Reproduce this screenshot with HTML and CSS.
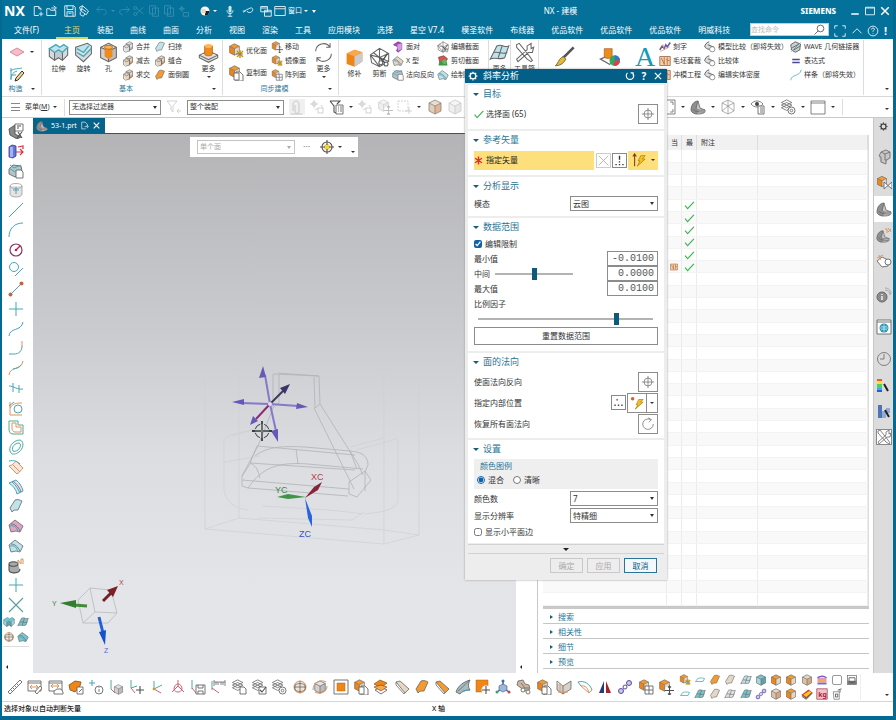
FILE: index.html
```html
<!DOCTYPE html>
<html lang="zh-CN">
<head>
<meta charset="utf-8">
<title>NX - 建模</title>
<link rel="stylesheet" href="styles.css">
</head>
<body>
<svg class="defs" aria-hidden="true">
  <symbol id="cube" viewBox="0 0 16 16"><path class="fa" d="M8 1l6 3-6 3-6-3z"/><path class="fb" d="M2 4l6 3v8l-6-3z"/><path class="fc" d="M14 4L8 7v8l6-3z"/><path class="k" d="M8 1l6 3v8l-6 3-6-3V4zM2 4l6 3 6-3M8 7v8"/></symbol>
  <symbol id="cubecopy" viewBox="0 0 16 16"><use href="#cube" width="13" height="13"/><path class="w" d="M8 7h4l3 3v6H8z"/><path class="w" d="M6 8h5v7H6z"/></symbol>
  <symbol id="cubemove" viewBox="0 0 16 16"><use href="#cube" width="13" height="13"/><circle cx="11.500" cy="11.500" r="4.500" fill="#fff"/><path class="k2" d="M11.500 7v9M7 11.500h9M10 8.500l1.500-1.500L13 8.500M10 14.500l1.500 1.500 1.500-1.500"/></symbol>
  <symbol id="cubestar" viewBox="0 0 16 16"><use href="#cube" width="13" height="13"/><path d="M9 8l6 6M15 8l-6 6M12 7v8" stroke="#c69a1c" stroke-width="1.500"/><path class="k" d="M8 11h7"/></symbol>
  <symbol id="cubegrid" viewBox="0 0 16 16"><use href="#cube" width="12" height="12"/><path class="w" d="M7 7h8v8H7zM11 7v8M7 11h8"/></symbol>
  <symbol id="bend" viewBox="0 0 16 16"><path class="fa" d="M1 5l5-3 3 2 3-2 3 2-4 4-3-2-3 2z"/><path class="fb" d="M1 5l4 3v6l-4-3zM11 8l4-4v6l-4 4z"/><path class="fc" d="M5 8l3-2 3 2v6l-3-2-3 2z"/><path class="k" d="M1 5v6l4 3 3-2 3 2 4-4V4M5 8v6M11 8v6"/><path class="t" d="M1 5l5-3 3 2 3-2 3 2-4 4-3-2-3 2z"/></symbol>
  <symbol id="revolve" viewBox="0 0 16 16"><path class="fa" d="M2 4l9-3 3 2-7 6z"/><path class="fb" d="M2 4l5 5 7-6v6l-6 6-6-5z"/><path class="k" d="M2 4l9-3 3 2v6l-6 6-6-5z"/><path class="t" d="M3 8l5 3 6-6M3 5l5 3 4-5"/></symbol>
  <symbol id="hole" viewBox="0 0 16 16"><use href="#cube" width="16" height="16"/><path fill="#ef8a1d" d="M5 4c0-2 6-2 6 0v7l-3 2-3-2z"/><ellipse cx="8" cy="4" rx="3" ry="1.500" fill="#ffb14d" stroke="#a55a10" stroke-width=".5"/></symbol>
  <symbol id="more3d" viewBox="0 0 16 16"><path d="M1 11l7-3 7 3-7 4z" fill="#ddd"/><path class="k" d="M1 10l7-3 7 3v2l-7 3.500L1 12zM1 10l7 3.500 7-3.500"/><path d="M5 3v6c0 2 6 2 6 0V3z" fill="#f08a1c" stroke="#a55a10" stroke-width=".5"/><ellipse cx="8" cy="3" rx="3" ry="1.500" fill="#ffb657"/></symbol>
  <symbol id="unite" viewBox="0 0 16 16"><path class="fa" d="M4 4l6-3 4 2v7l-5 5-6-2V7z"/><path class="fc" d="M10 9l4-2v3l-5 5z"/><path class="k" d="M5 4l5-3 4 2v7l-4 2V5zM10 5l4-2M2 7l4-2 4 2v6l-5 2-3-2zM2 7l4 2 4-2"/></symbol>
  <symbol id="sheet" viewBox="0 0 16 16"><path class="fa" d="M2 10L7 2c3-1 5 0 7 1l-4 9c-3 0-5 0-6 2z"/><path class="k" d="M2 10L7 2c3-1 5 0 7 1l-4 9c-3 0-5 0-6 2z"/></symbol>
  <symbol id="patchsheet" viewBox="0 0 16 16"><path class="fa" d="M1 13L6 3c4-2 6 2 9 0l-3 9c-4 2-7-1-11 1z"/><path class="k" d="M1 13L6 3c4-2 6 2 9 0l-3 9c-4 2-7-1-11 1zM4 8c4-1 6 2 10 0M10 3L7 12"/></symbol>
  <symbol id="stripe" viewBox="0 0 16 16"><path class="fa" d="M2 3l4-1 9 8-4 4z"/><path class="k" d="M2 3l4-1 9 8-4 4zM2 3v3l8 9 1-1"/></symbol>
  <symbol id="refresh" viewBox="0 0 16 16"><path class="k" d="M2 7a6 6 0 0 1 11-3M14 9a6 6 0 0 1-11 3M13 1v3h-3M3 15v-3h3"/></symbol>
  <symbol id="solid" viewBox="0 0 16 16"><path d="M2 5l6-3 6 2v7l-6 4-6-2z" fill="#ef8419"/><path d="M8 7l6-3v7l-6 4z" fill="#c9cbd0"/><path d="M2 5l6-3 6 2-6 3z" fill="#f9a94a"/></symbol>
  <symbol id="cutmesh" viewBox="0 0 16 16"><path class="k" d="M1 6l7-5 7 4v6l-7 4-6-3zM1 6l7 2 7-3M8 1v14M1 6l7 9M8 8l7 3M3 4l5 4"/><circle cx="9" cy="12" r="1.500" class="w"/><circle cx="13" cy="13" r="1.500" class="w"/><path class="k2" d="M10 11l4-6M12 12l-4-4"/></symbol>
  <symbol id="tools" viewBox="0 0 16 16"><path class="k" d="M2 2l2-1 8 10 2 3-1 1-3-2L2 4zM13 1l-3 2v3L2 13l1 2 8-7h3l1-4-2 1z"/></symbol>
  <symbol id="brush" viewBox="0 0 16 16"><path d="M15 1L7 9" stroke="#555" stroke-width="2"/><path d="M7 8l2 2c-2 4-5 5-8 5 2-1 2-5 6-7z" fill="#e7ba2d" stroke="#555" stroke-width=".6"/></symbol>
  <symbol id="pie3d" viewBox="0 0 16 16"><path class="w" d="M1 10l7-3 6 3-6 4z"/><path d="M4 2v6c0 2 6 2 6 0V2z" fill="#f08a1c" stroke="#a55a10" stroke-width=".5"/><circle cx="12" cy="11" r="4" fill="#35a85a"/><path d="M12 11V7a4 4 0 0 1 4 4z" fill="#3c71d0"/><path d="M12 11h4a4 4 0 0 1-5 4z" fill="#e03b4e"/></symbol>
  <symbol id="lens" viewBox="0 0 16 16"><circle cx="10" cy="6" r="4.500" class="k2"/><path class="k2" d="M7 9l-5 5"/></symbol>
  <symbol id="target" viewBox="0 0 16 16"><circle cx="8" cy="8" r="4.500" class="k"/><path class="k" d="M8 1v14M1 8h14"/></symbol>
  <symbol id="gear" viewBox="0 0 16 16"><circle cx="8" cy="8" r="4.500" fill="none" stroke="currentColor" stroke-width="2"/><path d="M8 1v2M8 13v2M1 8h2M13 8h2M3 3l1.500 1.500M11.500 11.500L13 13M13 3l-1.500 1.500M3 13l1.500-1.500" stroke="currentColor" stroke-width="2"/></symbol>
  <symbol id="reset" viewBox="0 0 16 16"><path d="M4 3a6 6 0 1 0 8 0M9 3h4v4" fill="none" stroke="currentColor" stroke-width="1.800"/></symbol>
  <symbol id="close" viewBox="0 0 16 16"><path d="M3 3l10 10M13 3L3 13" stroke="currentColor" stroke-width="2"/></symbol>
  <symbol id="check" viewBox="0 0 16 16"><path d="M1 9l4 5L15 3" fill="none" stroke="#35b54c" stroke-width="1.800"/></symbol>
  <symbol id="star" viewBox="0 0 16 16"><path d="M8 1v14M2 4l12 8M14 4L2 12" stroke="#e02c2c" stroke-width="2.500"/></symbol>
  <symbol id="cross" viewBox="0 0 16 16"><path d="M1 1l14 14M15 1L1 15" stroke="currentColor" stroke-width="1.200"/></symbol>
  <symbol id="dots" viewBox="0 0 16 16"><path fill="currentColor" d="M7 1h2v6H7zM7 9h2v2H7zM2 13h2v2H2zM7 13h2v2H7zM12 13h2v2h-2z"/></symbol>
  <symbol id="pdots" viewBox="0 0 16 16"><circle cx="6" cy="4" r="1.500" fill="#c26d5b"/><path fill="#444" d="M2 11h2v2H2zM7 11h2v2H7zM12 11h2v2h-2z"/></symbol>
  <symbol id="vecbolt" viewBox="0 0 16 16"><path d="M3 15V2M1 4l2-3 2 3" fill="none" stroke="#7a3b22" stroke-width="1.200"/><path d="M10 3h5l-3 4h3l-9 8 3-6H7z" fill="#f6c11d" stroke="#967110" stroke-width=".7"/></symbol>
  <symbol id="ptbolt" viewBox="0 0 16 16"><circle cx="3" cy="3" r="2" fill="#d2622f"/><path d="M10 4h5l-3 3h3l-9 8 3-5H7z" fill="#f6c11d" stroke="#967110" stroke-width=".7"/></symbol>
  <symbol id="restore" viewBox="0 0 16 16"><path class="k" d="M11 3a6 6 0 1 0 3 5M8 1l4 2-3 3"/></symbol>
  <symbol id="newdoc" viewBox="0 0 16 16"><path class="p" d="M9 14H3V2h6l3 3v2M9 2v3h3M12 9v6M9 12h6"/></symbol>
  <symbol id="open" viewBox="0 0 16 16"><path class="p" d="M1 14V5h4l1 2h7v7zM7 4h5M10 1l4 3-4 3"/></symbol>
  <symbol id="save" viewBox="0 0 16 16"><path class="p" d="M1 1h12l2 2v12H1zM4 1v5h8V1M4 15V9h8v6M6 11h4"/></symbol>
  <symbol id="pens" viewBox="0 0 16 16"><path class="p" d="M2 3l4-2 8 7-3 5-7-5zM6 1l-2 7M3 9v4l4 2 2-3M5 5l6 4"/></symbol>
  <symbol id="undo" viewBox="0 0 16 16"><path class="p" d="M5 2L1 6l4 4M1 6h9c5 0 5 7 0 7"/></symbol>
  <symbol id="redo" viewBox="0 0 16 16"><path class="p" d="M11 2l4 4-4 4M15 6H6c-5 0-5 7 0 7"/></symbol>
  <symbol id="scissors" viewBox="0 0 16 16"><path class="p" d="M4 12L14 3M4 4l10 8"/><circle cx="3" cy="4" r="2" class="p"/><circle cx="3" cy="12" r="2" class="p"/></symbol>
  <symbol id="copy" viewBox="0 0 16 16"><path class="p" d="M2 1h8v11H2zM6 4h8v11H6z"/></symbol>
  <symbol id="repeat" viewBox="0 0 16 16"><path class="p" d="M5 1v8M1 5h8M7 10h7v5H7z"/><circle cx="5" cy="5" r="2" class="p"/></symbol>
  <symbol id="ball" viewBox="0 0 16 16"><circle cx="8" cy="8" r="6" fill="#fff"/><path d="M8 8h6a6 6 0 0 1-6 6z" fill="#123"/><path d="M3 5h6v6H3z" fill="#e8d9c5"/></symbol>
  <symbol id="mic" viewBox="0 0 16 16"><rect x="6" y="1" width="4" height="9" rx="2" fill="#cfe6f0"/><path class="p" d="M4 7c0 6 8 6 8 0M8 12v3M5 15h6"/></symbol>
  <symbol id="link" viewBox="0 0 16 16"><path class="p" d="M2 10c2-4 6-4 9-6 5-1 4 5 0 6-2 0-4 0-4-2M1 8h4"/></symbol>
  <symbol id="wins" viewBox="0 0 16 16"><path class="p" d="M1 2h9v7H1zM6 7h9v8H6zM6 9h9M1 4h9"/></symbol>
  <symbol id="win" viewBox="0 0 16 16"><path class="p" d="M1 2h14v12H1zM1 5h14"/></symbol>
  <symbol id="export" viewBox="0 0 16 16"><path class="p" d="M10 14H3V2h6l4 4v3M8 10h6M12 7l3 3-3 3"/></symbol>
  <symbol id="full" viewBox="0 0 16 16"><path class="p" d="M1 5V1h4M11 1h4v4M15 11v4h-4M5 15H1v-4"/></symbol>
  <symbol id="up" viewBox="0 0 16 16"><path class="p" d="M2 11l6-6 6 6"/></symbol>
  <symbol id="help" viewBox="0 0 16 16"><circle cx="8" cy="8" r="6.500" class="p"/><path class="p" d="M6 6c0-3 5-2 4 0-1 1-2 1-2 3M8 11v1"/></symbol>
  <symbol id="min" viewBox="0 0 16 16"><path d="M3 12h10" stroke="#fff" stroke-width="2"/></symbol>
  <symbol id="maxi" viewBox="0 0 16 16"><path class="p" d="M2 3h12v10H2zM2 4h12"/></symbol>
  <symbol id="diamond" viewBox="0 0 16 16"><path d="M1 8l7-4 7 4-7 4z" fill="#f9bcc6" stroke="#c77988" stroke-width=".8"/></symbol>
  <symbol id="sketch" viewBox="0 0 16 16"><path class="t" d="M2 2v12M1 5c5-3 9-2 12-3M2 13c0-5 3-7 6-8M2 9h5"/><path d="M13 5l2 2-6 7-3 1 1-3z" fill="#f6d890" stroke="#333" stroke-width="1"/></symbol>
  <symbol id="filter" viewBox="0 0 16 16"><path class="k" d="M1 2h10L7 7v6l-2-2V7zM15 12h-4l2-2m-2 2l2 2"/></symbol>
  <symbol id="filterlist" viewBox="0 0 16 16"><path class="k2" d="M1 2h10L8 5M1 2l4 5v6l2 1"/><path class="w" d="M7 6h7v9H7zM9 8h1M9 10h1M9 12h1M11 8h2M11 10h2M11 12h2"/></symbol>
  <symbol id="rectsel" viewBox="0 0 16 16"><path class="k" stroke-dasharray="2 1" d="M1 2h10v10H1z"/><path class="k" d="M12 8v7M8 12h7"/></symbol>
  <symbol id="fit" viewBox="0 0 16 16"><path class="k" d="M1 1h14v14H1zM3 6V3h3M10 3h3v3M13 10v3h-3M6 13H3v-3"/></symbol>
  <symbol id="boot" viewBox="0 0 16 16"><path d="M1 11c0-5 3-9 7-9l2 7 5 2v2c-2 2-5 2-8 2-3 0-6-2-6-4z" fill="#c3c3c3"/><path d="M1 11c0-5 3-9 7-9l-2 8 3 2-2 3c-3 0-6-2-6-4z" fill="#8f8f8f"/><path class="k" d="M1 11c0-5 3-9 7-9l2 7 5 2v2c-2 2-5 2-8 2-3 0-6-2-6-4zM8 2L6 9c1 3 5 2 9 2M3 10c2 3 6 3 11 3"/></symbol>
  <symbol id="wirecube" viewBox="0 0 16 16"><path class="g" d="M8 1l6 3v8l-6 3-6-3V4zM2 4l6 3 6-3M8 7v8M2 12l6-5 6 5M8 1v6"/></symbol>
  <symbol id="eye" viewBox="0 0 16 16"><path class="k" d="M1 5c3-4 9-4 12 0-3 4-9 4-12 0z"/><circle cx="7" cy="5" r="2" fill="#444"/><path class="w" d="M8 7h6v8H8zM10 9h3M10 11h3M10 13h3"/></symbol>
  <symbol id="layers" viewBox="0 0 16 16"><path class="w" d="M1 10l6 3 6-3-6-3zM1 7l6 3 6-3-6-3zM1 4l6 3 6-3-6-3z"/></symbol>
  <symbol id="layergear" viewBox="0 0 16 16"><use href="#layers" width="15" height="14"/><circle cx="11.500" cy="11.500" r="3.500" class="w"/><circle cx="11.500" cy="11.500" r="1.300" class="k"/></symbol>
  <symbol id="layercopy" viewBox="0 0 16 16"><use href="#layers" width="15" height="14"/><path class="w" d="M9 8h4l2 2v5H9z"/></symbol>
  <symbol id="layercheck" viewBox="0 0 16 16"><use href="#layers" width="15" height="14"/><path class="w" d="M8 8h7v7H8z"/><path class="k2" d="M9 11l2 2 4-5"/></symbol>
  <symbol id="page" viewBox="0 0 16 16"><path class="k" d="M1 2h14v13H1zM1 4h14"/></symbol>
  <symbol id="clip" viewBox="0 0 16 16"><path class="k" d="M4 12V5c0-4 6-4 6 0v7c0 3-4 3-4 0V6M2 15h11"/></symbol>
  <symbol id="snap" viewBox="0 0 16 16"><path class="k" d="M5 1v8M1 5h8M9 9h5v5H9zM6 11l3-2M12 6l2 3"/><circle cx="5" cy="5" r="2" class="k"/></symbol>
  <symbol id="ruler" viewBox="0 0 16 16"><path class="w" d="M1 13L13 1l2 2L3 15zM4 11l1 1M6 9l1 1M8 7l1 1M10 5l1 1"/></symbol>
  <symbol id="dimbox" viewBox="0 0 16 16"><path class="w" d="M1 2h13v10H1zM1 4h13"/><path class="o" d="M3 8h8M5 6L3 8l2 2M9 6l2 2-2 2"/><path class="w" d="M8 13l5-6 2 2-5 6z"/></symbol>
  <symbol id="dimbox2" viewBox="0 0 16 16"><path class="w" d="M1 2h13v10H1zM1 4h13"/><path class="o" d="M3 7h8M5 5L3 7l2 2M9 5l2 2-2 2"/><path class="w" d="M6 15v-3l3-2h4l2 3v2z"/></symbol>
  <symbol id="paint" viewBox="0 0 16 16"><path d="M1 6l6-4 6 1-1 4-5 6-5-2z" fill="#ef8618" stroke="#704010" stroke-width=".7"/><path class="w" d="M9 8h6v7H9zM11 13l3-3"/></symbol>
  <symbol id="info" viewBox="0 0 16 16"><path class="t" d="M4 1v6M1 4h6"/><circle cx="11" cy="11" r="4" class="w"/><path class="k" d="M11 8v1M11 10v3"/></symbol>
  <symbol id="axcube" viewBox="0 0 16 16"><path class="gr" d="M2 1v9"/><path class="r" d="M2 10l4 4"/><use href="#cube" x="4" y="5" width="11" height="11"/></symbol>
  <symbol id="axmove" viewBox="0 0 16 16"><path class="gr" d="M2 1v8l6-2"/><path class="r" d="M2 9l4 5"/><path class="k2" d="M11 7v8M7 11h8"/></symbol>
  <symbol id="axes" viewBox="0 0 16 16"><path class="gr" d="M5 2v8l8-4"/><path class="r" d="M5 10l7 4"/><circle cx="5" cy="10" r="1.300" fill="#ef8a1d"/></symbol>
  <symbol id="pyr" viewBox="0 0 16 16"><path class="r" d="M8 1v6l-6 6M8 7l6 6M4 10c1 4 7 4 8 0M4 10c0-3 2-5 4-5s4 2 4 5"/></symbol>
  <symbol id="axsave" viewBox="0 0 16 16"><path class="gr" d="M2 1v9"/><path class="r" d="M2 9l4 5"/><path class="w" d="M6 6h9v9H6zM8 6v3h5V6M8 15v-3h5v3"/></symbol>
  <symbol id="axbox" viewBox="0 0 16 16"><path class="k" d="M4 1v6M15 1v6M4 3h11M6 3v3M8 3v3M11 3v3M13 3v3"/><path class="gr" d="M2 2v9"/><path class="r" d="M2 9l7 5"/></symbol>
  <symbol id="globe" viewBox="0 0 16 16"><circle cx="8" cy="8" r="6" fill="#f2e6d8"/><circle cx="8" cy="8" r="6" class="o"/><path class="k" d="M3 6c3-2 7-2 10 0v5c-3 2-7 2-10 0zM8 2v12M2 8h12"/></symbol>
  <symbol id="cubeorbit" viewBox="0 0 16 16"><use href="#cube" x="1" y="1" width="14" height="14"/><path class="o" d="M1 11C1 3 9 0 14 3M15 7c0 6-7 9-12 6"/></symbol>
  <symbol id="osq" viewBox="0 0 16 16"><path class="w" d="M1 1h14v14H1z"/><path fill="#ef8618" stroke="#b0610c" stroke-width=".5" d="M4 4h8v8H4z"/></symbol>
  <symbol id="osqmove" viewBox="0 0 16 16"><path fill="#ef8618" stroke="#b0610c" stroke-width=".5" d="M1 1h12v12H1z"/><circle cx="11" cy="11" r="4.500" fill="#fff"/><path class="k2" d="M11 7v8M7 11h8"/></symbol>
  <symbol id="twolayer" viewBox="0 0 16 16"><path class="w" d="M2 11l6 4 6-4-6-3z"/><path d="M1 5l6-4 7 3-6 5z" fill="#ef8618" stroke="#704010" stroke-width=".6"/><path d="M1 8l7 4 6-4-6-2z" fill="#f6a94d" stroke="#704010" stroke-width=".6"/></symbol>
  <symbol id="fan" viewBox="0 0 16 16"><path d="M1 13C3 7 8 3 15 1c-2 4-2 7 0 10-5 0-8 1-10 4z" fill="#a9bbbf" stroke="#4a5d60" stroke-width=".8"/><path class="k" d="M3 12C7 9 10 5 15 1"/><path class="t" d="M7 13c2-1 5-2 8-2"/></symbol>
  <symbol id="axisb" viewBox="0 0 16 16"><path d="M8 1v8M8 9l-6 4M8 9l6 4" stroke="#3e6cba" stroke-width="1.500"/><path d="M4 7l4-2 4 2v4l-4 2-4-2z" fill="#9cb8db" stroke="#456" stroke-width=".6"/><circle cx="8" cy="2" r="1.500" fill="#356bc2"/><circle cx="2" cy="13" r="1.500" fill="#31a56c"/><circle cx="14" cy="13" r="1.500" fill="#c34949"/></symbol>
  <symbol id="blob" viewBox="0 0 16 16"><path d="M2 2l5-1 2 4 4 1 1 4-4 2-5-3-4-3z" fill="#cbb7a2" stroke="#6c6158" stroke-width=".8"/><circle cx="7" cy="11" r="2" class="w"/><circle cx="12" cy="13" r="2" class="w"/><path class="k" d="M5 4l4 5 4 0"/></symbol>
  <symbol id="plane" viewBox="0 0 16 16"><path d="M1 4l6 3 8-5v8l-8 5-6-4z" fill="#d9d2ca"/><path class="k" d="M1 2l6 5 8-5v8l-8 5-6-4zM7 7v8"/><path class="o" d="M2 13h10M4 4v10"/></symbol>
  <symbol id="arcs" viewBox="0 0 16 16"><path class="t" d="M1 3c6-2 12 2 14 8M1 3l3 4"/><path class="o" d="M4 7c4-1 7 2 8 7l3-3M4 7l8 7"/></symbol>
  <symbol id="mirror" viewBox="0 0 16 16"><path fill="#283a7c" d="M7 2v12H2z"/><path fill="#a7232b" d="M9 2v12h5z"/></symbol>
  <symbol id="chain" viewBox="0 0 16 16"><path d="M2 14l12-12" stroke="#6f62b3" stroke-dasharray="2 1"/><circle cx="4" cy="12" r="2.500" fill="#cac5ea" stroke="#5a4da1"/><circle cx="12" cy="4" r="2.500" fill="#cac5ea" stroke="#5a4da1"/><circle cx="8" cy="8" r="2" fill="#fff" stroke="#5a4da1"/></symbol>
  <symbol id="flat" viewBox="0 0 16 16"><path class="t" d="M2 10l3-4c3-1 6-1 9 0l-2 4z"/></symbol>
  <symbol id="rainbow" viewBox="0 0 16 16"><path d="M2 5h12v8H2z" fill="#dc9ac4"/><path d="M2 5c5-3 8-3 12 0" fill="none" stroke="#7c5ac4" stroke-width="2"/><path d="M2 13h12" stroke="#5d7cc4" stroke-width="2"/><path d="M4 9h8" stroke="#efb246" stroke-width="2"/></symbol>
  <symbol id="round" viewBox="0 0 16 16"><rect class="w" x="2" y="2" width="12" height="12" rx="2"/></symbol>
  <symbol id="dome" viewBox="0 0 16 16"><rect class="w" x="2" y="2" width="12" height="12"/><path d="M2 9h12v5H2z" fill="#777"/><path class="k2" d="M4 5h8v4c-1 3-7 3-8 0z"/></symbol>
  <symbol id="kg" viewBox="0 0 16 16"><path d="M1 1h14v14H1z" fill="#f3c1c8" stroke="#a34658"/><text x="3" y="12" font-size="9" font-weight="700" fill="#a71f3b">kg</text></symbol>
  <symbol id="stack" viewBox="0 0 16 16"><path d="M1 9l9-7 5 4-8 8z" fill="#e23a24"/><path d="M3 9l8-5 3 2-7 6z" fill="#f6c928"/><path class="k2" d="M1 9l6 5 8-8M1 11l6 4 8-8"/></symbol>
  <symbol id="bell" viewBox="0 0 16 16"><path class="w" d="M3 5h8v10H4z"/><path class="k2" d="M6 8h3v4H6zM9 3l5-2M12 2v4"/></symbol>
  <symbol id="line" viewBox="0 0 16 16"><path class="t" d="M1 15L15 1"/></symbol>
  <symbol id="arc" viewBox="0 0 16 16"><path class="t" d="M1 15C1 7 6 1 15 1"/></symbol>
  <symbol id="circ" viewBox="0 0 16 16"><circle cx="8" cy="8" r="6" fill="none" stroke="#84336b" stroke-width="1.200"/><path d="M8 8l4-4" stroke="#b5234b" stroke-width="1.200"/><circle cx="8" cy="8" r="1.300" fill="#b5234b"/></symbol>
  <symbol id="tanline" viewBox="0 0 16 16"><circle cx="6" cy="6" r="4.500" class="t"/><path class="t" d="M7 15l8-8"/></symbol>
  <symbol id="seg" viewBox="0 0 16 16"><path class="t" d="M2 14L14 2"/><circle cx="2.500" cy="13.500" r="2" fill="#c26540"/><circle cx="13.500" cy="2.500" r="2" fill="#c26540"/></symbol>
  <symbol id="plus" viewBox="0 0 16 16"><path class="t" d="M8 1v14M1 8h14"/></symbol>
  <symbol id="spline" viewBox="0 0 16 16"><path class="t" d="M1 15c1-9 12-4 14-14"/></symbol>
  <symbol id="fillet" viewBox="0 0 16 16"><path class="t" d="M1 14h5c5 0 8-3 8-8"/><path class="o" d="M14 7V1"/></symbol>
  <symbol id="spline2" viewBox="0 0 16 16"><path class="o" d="M1 15c1-9 12-4 14-14"/><path class="t" d="M5 9c4-1 6-1 8-4"/></symbol>
  <symbol id="trimc" viewBox="0 0 16 16"><path class="t" d="M1 6c5 0 8 4 14 3M5 3v9"/><path class="gr" d="M11 5v8"/></symbol>
  <symbol id="skc" viewBox="0 0 16 16"><path class="o" d="M2 2v13h12M2 8c3-5 7-5 12-5"/><circle cx="10" cy="9" r="4" class="t"/><path class="t" d="M1 6l5-4"/></symbol>
  <symbol id="offset" viewBox="0 0 16 16"><path class="gr" d="M1 2h9v4h5v9H5c-3 0-4-2-4-5z"/><path class="o" d="M4 4h4v4h5v5H7c-2 0-3-2-3-4z"/></symbol>
  <symbol id="loop" viewBox="0 0 16 16"><path class="gr" d="M3 14C-1 9 5 1 12 1c5 2 3 9-1 12-3 2-6 3-8 1z"/><path class="t" d="M5 12c-2-4 2-8 6-8 3 1 1 5-1 7-2 1-4 2-5 1z"/></symbol>
  <symbol id="surf" viewBox="0 0 16 16"><path fill="#f6e6dc" d="M1 7c4-1 5-3 7-5l7 7c-2 2-3 4-6 6z"/><path class="o" d="M1 7c4-1 5-3 7-5l7 7c-2 2-3 4-6 6zM5 6l7 7"/><path class="t" d="M1 2c5-1 8 0 11 3"/></symbol>
  <symbol id="surf2" viewBox="0 0 16 16"><path fill="#d4ecef" d="M1 4l7-3c4 3 6 7 7 11l-6 3C8 10 5 7 1 4z"/><path class="t" d="M1 4l7-3c4 3 6 7 7 11l-6 3C8 10 5 7 1 4zM4 3c4 3 6 7 8 11"/><path class="r" d="M5 2c4 3 7 7 8 11"/></symbol>
  <symbol id="surf3" viewBox="0 0 16 16"><path class="fa" d="M1 7l6-5 8 6-3 6-4-1-5 1z"/><path class="k" d="M1 7l6-5 8 6-3 6-4-1-5 1zM3 6c4 0 7 3 9 7"/><path class="t" d="M2 8c5-1 7 2 8 6"/></symbol>
  <symbol id="cyl" viewBox="0 0 16 16"><path class="fa" d="M2 4v8c0 4 12 4 12 0V4z"/><path class="g" d="M2 4v8c0 4 12 4 12 0V4"/><ellipse cx="8" cy="4" rx="6" ry="2.500" class="g"/><path class="t" d="M8 5v7M5 8h6"/></symbol>
  <symbol id="cylq" viewBox="0 0 16 16"><path fill="#aaa" d="M1 6c0-3 9-3 9 0l2 6c-2 4-11 4-11 1z"/><path class="k2" d="M1 6c0-3 9-3 9 0s-9 3-9 0v6c0 4 11 4 11-1"/><path class="o" d="M10 6V2l3 4V1h2v5"/></symbol>
  <symbol id="flag" viewBox="0 0 16 16"><path d="M1 6l6-4v9l6 3-4 2-7-4z" fill="#888" stroke="#444" stroke-width=".8"/><path class="w" d="M7 1h8v7H7z"/><path class="k2" d="M9 3h4M9 5h2M10 9l4 6M14 9l-5 6"/></symbol>
  <symbol id="bluebox" viewBox="0 0 16 16"><path d="M1 4l3-2 4 1v10l-3 2-4-1z" fill="#6677d6" stroke="#2f3b95" stroke-width=".8"/><path d="M2 4h3v10H2z" fill="#a7b3ee"/><path d="M8 9h7M12 6l3 3-3 3M10 4l5-1v3" stroke="#d73345" fill="none" stroke-width="1.200"/></symbol>
  <symbol id="blockcopy" viewBox="0 0 16 16"><path d="M1 6l4-4 8 1 1 5-7 6-6-3z" fill="#b4c6c8" stroke="#556" stroke-width=".8"/><path class="t" d="M2 2l4 3 7-3M1 5l6 4"/><path class="w" d="M8 7h5l2 2v6H8z"/></symbol>
  <symbol id="part" viewBox="0 0 16 16"><path fill="#c6c6c6" d="M5 3l5-2 4 2v6l-5 6-5-2-1-5z"/><path class="k" d="M5 3l5-2 4 2v6l-4 2v4l-5-2V8L3 7zM5 3l4 2 5-2M9 5v6l1 0"/></symbol>
  <symbol id="rels" viewBox="0 0 16 16"><use href="#cube" width="12" height="13"/><path class="w" d="M8 7l8 7V7l-8 7z"/></symbol>
  <symbol id="bootplus" viewBox="0 0 16 16"><use href="#boot" y="2" width="14" height="14"/><path class="o" d="M9 2h2v4M12 5l3-3M12 1l3 4"/></symbol>
  <symbol id="tag" viewBox="0 0 16 16"><path class="w" d="M1 8l5-4 6 3v6l-6 1z"/><path class="o" d="M1 5l6-3M3 2l2 5"/><circle cx="12" cy="9" r="3" class="w"/></symbol>
  <symbol id="wifi" viewBox="0 0 16 16"><circle cx="6" cy="10" r="5" fill="#8c8c8c" stroke="#666"/><path d="M6 7v1M6 9v4" stroke="#eee" stroke-width="1.500"/><path class="g" d="M9 3c3 0 5 2 5 5M9 1c4 0 6 3 6 6"/></symbol>
  <symbol id="web" viewBox="0 0 16 16"><path class="w" d="M1 1h14v14H1zM1 3h14"/><circle cx="8" cy="9" r="4.500" fill="#2693b3"/><path d="M4 9h8M8 5v8M5 7c2 1 4 1 6 0M5 11c2-1 4-1 6 0" stroke="#d6f0f5" stroke-width=".7" fill="none"/></symbol>
  <symbol id="clock" viewBox="0 0 16 16"><circle cx="8" cy="8" r="6.500" class="k"/><path class="k" d="M8 3v5H4"/></symbol>
  <symbol id="bars" viewBox="0 0 16 16"><path fill="#f05b28" d="M1 2h5v2H1z"/><path fill="#f4e23a" d="M1 4h5v3H1z"/><path fill="#4fd357" d="M1 7h5v4H1z"/><path fill="#29b8e3" d="M1 11h5v2H1z"/><path fill="#3e51ca" d="M1 13h5v2H1z"/><path d="M8 7l4 7" stroke="#222" stroke-width="2"/></symbol>
  <symbol id="colsic" viewBox="0 0 16 16"><path fill="#4b74b9" d="M2 2h4v13H2z"/><path fill="#92abd6" d="M6 8h4v7H6zM10 5h4v5h-4z"/><path d="M9 7l4 7" stroke="#222" stroke-width="2"/></symbol>
  <symbol id="purple" viewBox="0 0 16 16"><path d="M2 5l6-4 5 2v8l-5 4-2-2 2-5z" fill="#a84bc1" stroke="#5f2279" stroke-width=".8"/><path d="M7 5l6-2v8l-5 2z" fill="#d79be6"/></symbol>
  <symbol id="redgreen" viewBox="0 0 16 16"><path d="M2 3l7-2 5 4-3 5-7 1z" fill="#d35750" stroke="#6b2a26" stroke-width=".8"/><path d="M3 9h10l1 5H2z" fill="#3d9a43"/><circle cx="10" cy="9" r="3" fill="#61b863"/></symbol>
  <symbol id="hatch" viewBox="0 0 16 16"><path d="M1 2h14v12H1z" fill="#f2cfa4" stroke="#9a5a3f"/><path d="M3 4l4 8M7 3v10M11 3v10M10 6l4 2" stroke="#b05c31"/></symbol>
  <symbol id="wave" viewBox="0 0 16 16"><path d="M1 12l3-5 3 3 2-5 2 3 4-6" stroke="#6756a7" stroke-width="2" fill="none"/><path class="o" d="M2 14l12-6M5 4l2 8"/></symbol>
  <symbol id="compare" viewBox="0 0 16 16"><path fill="#ddd" d="M1 7c0-4 4-6 6-6l2 5 5 3-3 5-6-2z"/><path class="k2" d="M7 1C3 2 1 5 1 8c3 3 6 4 10 2M5 5l8 3"/><circle cx="11" cy="11" r="3.500" class="w"/></symbol>
  <symbol id="linker" viewBox="0 0 16 16"><path fill="#cfcfcf" d="M1 5l6-4 7 3-1 8-6 3-5-3z"/><path class="k2" d="M1 5l6-4 7 3-1 8-6 3-5-3zM3 9l9-5M5 12l8-5"/><path class="t" d="M2 14L14 2"/></symbol>
  <symbol id="equal" viewBox="0 0 16 16"><path d="M3 6h10M3 10h10" stroke="#4d4793" stroke-width="2"/></symbol>
</svg>

<div class="app">
<header class="titlebar">
  <strong class="logo">NX</strong>
  <div class="quick">
    <button aria-label="新建"><svg class="ic"><use href="#newdoc"/></svg></button>
    <button class="gap4" aria-label="打开"><svg class="ic"><use href="#open"/></svg></button>
    <button aria-label="保存"><svg class="ic"><use href="#save"/></svg></button>
    <button class="gap4" aria-label="特征"><svg class="ic"><use href="#pens"/></svg></button>
    <span class="faded">
      <button aria-label="撤消"><svg class="ic"><use href="#undo"/></svg></button><i class="dn"></i>
      <button aria-label="重做"><svg class="ic"><use href="#redo"/></svg></button>
      <button aria-label="剪切"><svg class="ic"><use href="#scissors"/></svg></button>
      <button aria-label="复制"><svg class="ic"><use href="#copy"/></svg></button>
      <button aria-label="粘贴"><svg class="ic"><use href="#copy"/></svg></button>
      <button aria-label="重复"><svg class="ic"><use href="#repeat"/></svg></button>
    </span>
    <button aria-label="渲染样式"><svg class="ic"><use href="#ball"/></svg></button><i class="dn"></i>
    <button class="mic gap4" aria-label="语音"><svg class="ic"><use href="#mic"/></svg></button>
    <button class="gap4" aria-label="触控"><svg class="ic"><use href="#link"/></svg></button>
    <button aria-label="切换窗口"><svg class="ic"><use href="#wins"/></svg></button>
    <button class="winbtn"><svg class="ic"><use href="#win"/></svg>窗口</button>
    <i class="dn"></i><i class="dn over"></i>
  </div>
  <span class="apptitle">NX - 建模</span>
  <div class="brand"><b>SIEMENS</b>
    <button aria-label="最小化"><svg class="ic"><use href="#min"/></svg></button>
    <button aria-label="最大化"><svg class="ic"><use href="#maxi"/></svg></button>
    <button aria-label="关闭"><svg class="ic"><use href="#close"/></svg></button>
  </div>
</header>

<nav class="tabs">
  <a class="file" href="#">文件(F)</a><a class="on" href="#">主页</a><a href="#">装配</a><a href="#">曲线</a><a href="#">曲面</a><a href="#">分析</a><a href="#">视图</a><a href="#">渲染</a><a href="#">工具</a><a href="#">应用模块</a><a href="#">选择</a><a href="#">星空 V7.4</a><a href="#">模圣软件</a><a href="#">布线器</a><a href="#">优品软件</a><a href="#">优品软件</a><a href="#">优品软件</a><a href="#">明威科技</a>
  <label class="search"><input type="text" placeholder="查找命令" aria-label="查找命令"><svg class="ic"><use href="#lens"/></svg></label>
  <span class="tabend">
    <button aria-label="全屏"><svg class="ic"><use href="#full"/></svg></button>
    <button aria-label="收起"><svg class="ic"><use href="#up"/></svg></button>
    <button aria-label="帮助"><svg class="ic"><use href="#help"/></svg></button>
    <b>!</b>
  </span>
</nav>

<section class="ribbon">
  <div class="group g1">
    <div class="cols"><div class="stack2">
      <button aria-label="基准平面"><svg class="ic m"><use href="#diamond"/></svg><i class="dn"></i></button>
      <button aria-label="草图"><svg class="ic m"><use href="#sketch"/></svg></button>
    </div></div>
    <div class="glabel">构造<i class="dn"></i></div>
  </div>
  <div class="group g2">
    <div class="cols">
      <button class="big"><svg class="ic l ice"><use href="#bend"/></svg>拉伸</button>
      <button class="big"><svg class="ic l ice"><use href="#revolve"/></svg>旋转</button>
      <button class="big"><svg class="ic l"><use href="#hole"/></svg>孔</button>
      <div class="trio c32">
        <button><svg class="ic"><use href="#unite"/></svg>合并</button>
        <button><svg class="ic tan"><use href="#unite"/></svg>减去</button>
        <button><svg class="ic tan"><use href="#unite"/></svg>求交</button>
      </div>
      <div class="trio c40">
        <button><svg class="ic ice"><use href="#sheet"/></svg>扫掠</button>
        <button><svg class="ic tan"><use href="#unite"/></svg>缝合</button>
        <button><svg class="ic or"><use href="#sheet"/></svg>面倒圆</button>
      </div>
      <button class="big"><svg class="ic l"><use href="#more3d"/></svg>更多<i class="dn"></i></button>
    </div>
    <div class="glabel">基本<i class="dn"></i></div>
  </div>
  <div class="group g3">
    <div class="cols">
      <div class="duo">
        <button><svg class="ic m or"><use href="#cubestar"/></svg>优化面</button>
        <button><svg class="ic m or"><use href="#cubecopy"/></svg>复制面</button>
      </div>
      <div class="trio c40">
        <button><svg class="ic or"><use href="#cubemove"/></svg>移动</button>
        <button><svg class="ic or"><use href="#cubestar"/></svg>镜像面</button>
        <button><svg class="ic or"><use href="#cubegrid"/></svg>阵列面</button>
      </div>
      <button class="big"><svg class="ic l"><use href="#refresh"/></svg>更多<i class="dn"></i></button>
    </div>
    <div class="glabel">同步建模<i class="dn"></i></div>
  </div>
  <div class="group g4">
    <div class="cols">
      <button class="big low"><svg class="ic l"><use href="#solid"/></svg>修补</button>
      <button class="big low"><svg class="ic l"><use href="#cutmesh"/></svg>剪断</button>
      <div class="trio c45">
        <button><svg class="ic"><use href="#purple"/></svg>面对</button>
        <button><svg class="ic tan"><use href="#surf3"/></svg>X 型</button>
        <button><svg class="ic"><use href="#blockcopy"/></svg>法向反向</button>
      </div>
      <div class="trio c50">
        <button><svg class="ic tan"><use href="#cutmesh"/></svg>编辑截面</button>
        <button><svg class="ic"><use href="#redgreen"/></svg>剪切截面</button>
        <button><svg class="ic ice"><use href="#surf3"/></svg>绘制截面</button>
      </div>
    </div>
  </div>
  <div class="group g5"><div class="cols"><button class="big"><svg class="ic l ice"><use href="#patchsheet"/></svg>更多</button></div></div>
  <div class="group g6"><div class="cols"><button class="big"><svg class="ic l"><use href="#tools"/></svg>工具箱</button></div></div>
  <div class="group g7">
    <div class="cols">
      <button class="solo" aria-label="画笔"><svg class="ic l"><use href="#brush"/></svg></button>
      <button class="solo" aria-label="模型"><svg class="ic l"><use href="#pie3d"/></svg></button>
      <button class="letter">A</button>
      <div class="trio c45">
        <button><svg class="ic"><use href="#wave"/></svg>刻字</button>
        <button><svg class="ic"><use href="#hatch"/></svg>毛坯套裁</button>
        <button><svg class="ic"><use href="#hatch"/></svg>冲模工程</button>
      </div>
      <div class="trio c86">
        <button><svg class="ic"><use href="#compare"/></svg>模型比较（即将失效）</button>
        <button><svg class="ic"><use href="#compare"/></svg>比较体</button>
        <button><svg class="ic"><use href="#compare"/></svg>编辑实体密度</button>
      </div>
      <div class="trio">
        <button><svg class="ic"><use href="#linker"/></svg>WAVE 几何链接器</button>
        <button><svg class="ic"><use href="#equal"/></svg>表达式</button>
        <button><svg class="ic"><use href="#spline"/></svg>样条（即将失效）</button>
      </div>
    </div>
  </div>
  <i class="dn ribend"></i>
</section>

<section class="selbar">
  <button class="menu"><span class="burger"></span>菜单(<u>M</u>)<i class="dn"></i></button>
  <span class="sel s1"><select aria-label="过滤器"><option>无选择过滤器</option></select></span>
  <svg class="ic m dim"><use href="#filter"/></svg>
  <span class="sel s2"><select aria-label="范围"><option>整个装配</option></select></span>
  <div class="selicons">
    <button class="lit" aria-label="包含"><svg class="ic m dim"><use href="#clip"/></svg></button>
    <button aria-label="捕捉"><svg class="ic m dim"><use href="#snap"/></svg></button>
    <button aria-label="过滤列表"><svg class="ic m"><use href="#filterlist"/></svg></button><i class="dn"></i>
    <button aria-label="选择范围"><svg class="ic m dim"><use href="#snap"/></svg></button>
    <button aria-label="选择体"><svg class="ic m dim"><use href="#cubemove"/></svg></button>
    <button aria-label="框选"><svg class="ic m dim"><use href="#rectsel"/></svg></button><i class="dn"></i>
    <button class="shade" aria-label="着色"><svg class="ic m tan half"><use href="#cube"/></svg></button>
    <button aria-label="线框"><svg class="ic m dim"><use href="#cube"/></svg></button>
  </div>
  <div class="viewicons">
    <button aria-label="适合窗口"><svg class="ic m"><use href="#fit"/></svg></button><i class="dn"></i>
    <button aria-label="着色样式"><svg class="ic m"><use href="#boot"/></svg></button><i class="dn"></i>
    <button aria-label="定向视图"><svg class="ic m"><use href="#wirecube"/></svg></button><i class="dn"></i>
    <button aria-label="显示隐藏"><svg class="ic m"><use href="#eye"/></svg></button><i class="dn"></i>
    <button aria-label="图层"><svg class="ic m"><use href="#layergear"/></svg></button><i class="dn"></i>
    <button aria-label="窗口"><svg class="ic m"><use href="#page"/></svg></button><i class="dn"></i>
  </div>
  <i class="dn selend"></i>
</section>

<main class="work">
  <aside class="leftbar">
    <div class="lefticons">
      <svg class="ic m"><use href="#flag"/></svg><svg class="ic m"><use href="#bluebox"/></svg><svg class="ic m"><use href="#blockcopy"/></svg><svg class="ic m"><use href="#cyl"/></svg><svg class="ic m"><use href="#line"/></svg><svg class="ic m"><use href="#arc"/></svg><svg class="ic m"><use href="#circ"/></svg><svg class="ic m"><use href="#tanline"/></svg><svg class="ic m"><use href="#seg"/></svg><svg class="ic m"><use href="#plus"/></svg><svg class="ic m"><use href="#spline"/></svg><svg class="ic m"><use href="#fillet"/></svg><svg class="ic m"><use href="#spline2"/></svg><svg class="ic m"><use href="#trimc"/></svg><svg class="ic m"><use href="#skc"/></svg><svg class="ic m"><use href="#offset"/></svg><svg class="ic m"><use href="#loop"/></svg><svg class="ic m"><use href="#surf"/></svg><svg class="ic m"><use href="#surf2"/></svg><svg class="ic m ice"><use href="#sheet"/></svg><svg class="ic m pink"><use href="#surf3"/></svg><svg class="ic m ice"><use href="#surf3"/></svg><svg class="ic m"><use href="#cylq"/></svg><svg class="ic m"><use href="#plus"/></svg><svg class="ic m tealx"><use href="#cross"/></svg>
    </div>
    <div class="quad"><svg class="ic teal"><use href="#bend"/></svg><svg class="ic teal"><use href="#patchsheet"/></svg><svg class="ic"><use href="#globe"/></svg><svg class="ic teal"><use href="#surf3"/></svg></div>
    <i class="lt"></i>
  </aside>

  <section class="center">
    <div class="doctabs"><a class="doc" href="#"><svg class="ic"><use href="#boot"/></svg>53-1.prt<svg class="ic s"><use href="#export"/></svg><svg class="ic s"><use href="#close"/></svg></a></div>
    <div class="viewrow">
    <div class="viewport">
      <svg class="scene" viewBox="33 134 483 539" preserveAspectRatio="xMinYMin slice">
        <g class="ghost">
          <path d="M205 380v149l179 15 35-9V382M205 529l34-11 145 12M384 375v169M239 375v143M384 530l35 5M224 440c2-6 20-8 32-10M224 440v50c2 14 14 19 24 20M224 462l36-6M398 440v60c-2 10-14 12-34 14M356 450l34-9 8-3M350 447l34-9M262 506c30 2 70 3 100 8M257 518l95 2 12-8M232 436l26-8"/>
        </g>
        <g class="wire">
          <path d="M273 374l46 2 1 28-5 4-1-31M279 375v28l-6 5v-34M278 373l41 3M314 408l40 81M320 404l38 60 5 11M273 408l-15 38-16 30M257 446l98 9M257 446l-7 17 105 7M255 456c12-10 30-10 50-9l45 4c12 1 18 5 18 14l-3 7M250 463c5 2 8 6 10 15M242 476v10l6 2 100 8M242 476l8-12M248 488c15-22 32-26 60-24l55 5M296 449l2 15M349 482l16-11 6 9-14 17-8-3zM242 480l107 9M365 471v20M350 451l7 18"/>
        </g>
        <g>
          <path d="M270 404l-5-29M270 404l-28-1M270 404l28 2M270 404l6 27" stroke="#8579c9" stroke-width="2"/>
          <path d="M270 404l14-14" stroke="#443863" stroke-width="2"/><path d="M270 404l-14 15" stroke="#8b2c72" stroke-width="2"/>
          <path d="M263 366l-4 12 7-1zM232 402l12-3v6zM308 407l-11-4-1 6zM278 442l-7-11 7-2zM250 425l3-9 5 5z" fill="#6459b7"/><path d="M290 384l-10 4 5 6z" fill="#3d3269"/>
          <circle cx="270" cy="404" r="2" fill="#e3e0ee"/>
        </g>
        <g class="cursor"><circle cx="262" cy="431" r="7"/><path d="M262 421v20M252 431h20"/><path class="inner" d="M262 424v14M255 431h14"/></g>
        <path d="M306 497l-18-3-11 3 11 2z" fill="#3f9447"/><path d="M305 498l9-11 8-5-4 8z" fill="#87233a"/><path d="M305 498l3 20 4 9v-11z" fill="#2765df"/>
        <text x="311" y="480" fill="#b93b4d">XC</text><text x="275" y="493" fill="#398747">YC</text><text x="299" y="537" fill="#3552c7">ZC</text>
        <path class="boxl" d="M90 588l21 2 6 23-9 10H83l-5-23zM90 588l5 24-12 11M95 612l22 1"/>
        <path d="M103 601l8-8" stroke="#6f2228" stroke-width="3"/><path d="M118 586l-11 4 6 7z" fill="#7d2027"/>
        <path d="M87 606l-13-1" stroke="#428c38" stroke-width="3"/><path d="M60 603l16-3v8z" fill="#337d30"/>
        <path d="M99 617l4 16" stroke="#2160d8" stroke-width="3"/><path d="M105 645l-6-13 7-2z" fill="#164ed0"/>
        <text class="sm" x="119" y="585" fill="#a9434b">X</text><text class="sm" x="52" y="606" fill="#3a843c">Y</text><text class="sm" x="104" y="653" fill="#5967cf">Z</text>
      </svg>
      <div class="floatbar"><span class="sel"><select aria-label="选择意图" disabled><option>单个面</option></select></span><span class="ell">···</span><svg class="ic m gold" viewBox="0 0 16 16"><circle cx="8" cy="8" r="3" fill="#f5d23b"/><circle cx="8" cy="8" r="5" class="k2"/><path class="k2" d="M8 1v5M8 10v5M1 8h5M10 8h5"/></svg><i class="dn"></i><i class="dn end"></i></div>
    </div>
    <div class="gutter"><i class="lt"></i></div>
    </div>
  </section>

  <section class="navigator">
    <div class="tablewrap">
    <table>
      <colgroup><col><col class="n"><col class="n"><col class="note"><col class="rest"></colgroup>
      <thead><tr><th></th><th>当</th><th>最</th><th>附注</th><th></th></tr></thead>
      <tbody>
      <tr><td></td><td></td><td></td><td></td><td></td></tr>
      <tr><td></td><td></td><td></td><td></td><td></td></tr>
      <tr><td></td><td></td><td></td><td></td><td></td></tr>
      <tr><td></td><td></td><td></td><td></td><td></td></tr>
      <tr><td></td><td></td><td><svg class="ic"><use href="#check"/></svg></td><td></td><td></td></tr>
      <tr><td></td><td></td><td><svg class="ic"><use href="#check"/></svg></td><td></td><td></td></tr>
      <tr><td></td><td></td><td><svg class="ic"><use href="#check"/></svg></td><td></td><td></td></tr>
      <tr><td></td><td></td><td><svg class="ic"><use href="#check"/></svg></td><td></td><td></td></tr>
      <tr><td></td><td></td><td><svg class="ic"><use href="#check"/></svg></td><td></td><td></td></tr>
      <tr><td></td><td><svg class="ic narrow"><use href="#hatch"/></svg></td><td><svg class="ic"><use href="#check"/></svg></td><td></td><td></td></tr>
      <tr><td></td><td></td><td></td><td></td><td></td></tr>
      <tr><td></td><td></td><td></td><td></td><td></td></tr>
      <tr><td></td><td></td><td></td><td></td><td></td></tr>
      <tr><td></td><td></td><td></td><td></td><td></td></tr>
      <tr><td></td><td></td><td></td><td></td><td></td></tr>
      <tr><td></td><td></td><td></td><td></td><td></td></tr>
      <tr><td></td><td></td><td></td><td></td><td></td></tr>
      <tr><td></td><td></td><td></td><td></td><td></td></tr>
      <tr><td></td><td></td><td></td><td></td><td></td></tr>
      <tr><td></td><td></td><td></td><td></td><td></td></tr>
      <tr><td></td><td></td><td></td><td></td><td></td></tr>
      <tr><td></td><td></td><td></td><td></td><td></td></tr>
      <tr><td></td><td></td><td></td><td></td><td></td></tr>
      <tr><td></td><td></td><td></td><td></td><td></td></tr>
      <tr><td></td><td></td><td></td><td></td><td></td></tr>
      <tr><td></td><td></td><td></td><td></td><td></td></tr>
      <tr><td></td><td></td><td></td><td></td><td></td></tr>
      <tr><td></td><td></td><td></td><td></td><td></td></tr>
      <tr><td></td><td></td><td></td><td></td><td></td></tr>
      <tr><td></td><td></td><td></td><td></td><td></td></tr>
      <tr><td></td><td></td><td></td><td></td><td></td></tr>
      <tr><td></td><td></td><td></td><td></td><td></td></tr>
      <tr><td></td><td></td><td></td><td></td><td></td></tr>
      <tr><td></td><td></td><td></td><td></td><td></td></tr>
      <tr><td></td><td></td><td></td><td></td><td></td></tr>
      <tr><td></td><td></td><td></td><td></td><td></td></tr>
      <tr><td></td><td></td><td></td><td></td><td></td></tr>
      </tbody>
    </table>
    </div>
    <div class="hbar"></div>
    <button class="fold">搜索</button><button class="fold">相关性</button><button class="fold">细节</button><button class="fold">预览</button>
  </section>

  <aside class="rightbar">
    <button class="cog" aria-label="设置"><svg class="ic"><use href="#gear"/></svg></button>
    <button aria-label="装配导航器"><svg class="ic m"><use href="#part"/></svg></button>
    <button aria-label="约束导航器"><svg class="ic m or"><use href="#rels"/></svg></button>
    <button class="on" aria-label="部件导航器"><svg class="ic m"><use href="#boot"/></svg></button>
    <button aria-label="重用库"><svg class="ic m"><use href="#bootplus"/></svg></button>
    <button aria-label="视图管理"><svg class="ic m"><use href="#tag"/></svg></button>
    <button class="sp8" aria-label="信息"><svg class="ic m"><use href="#wifi"/></svg></button>
    <button class="sp6" aria-label="浏览器"><svg class="ic m"><use href="#web"/></svg></button>
    <button class="sp6" aria-label="历史记录"><svg class="ic m"><use href="#clock"/></svg></button>
    <button aria-label="材料"><svg class="ic m"><use href="#bars"/></svg></button>
    <button aria-label="场景"><svg class="ic m"><use href="#colsic"/></svg></button>
    <button aria-label="工具"><svg class="ic m boxed"><use href="#tools"/></svg></button>
  </aside>
</main>

<section class="bottombar">
  <div class="bigicons">
    <svg class="ic m"><use href="#ruler"/></svg><svg class="ic m"><use href="#dimbox"/></svg><svg class="ic m"><use href="#dimbox2"/></svg><svg class="ic m"><use href="#paint"/></svg><svg class="ic m"><use href="#info"/></svg><svg class="ic m"><use href="#axcube"/></svg><svg class="ic m"><use href="#axmove"/></svg><svg class="ic m"><use href="#axes"/></svg><svg class="ic m"><use href="#pyr"/></svg><svg class="ic m"><use href="#axsave"/></svg><svg class="ic m"><use href="#axbox"/></svg><svg class="ic m"><use href="#layercopy"/></svg><svg class="ic m"><use href="#layercheck"/></svg><svg class="ic m"><use href="#layergear"/></svg><svg class="ic m"><use href="#globe"/></svg><svg class="ic m"><use href="#cubeorbit"/></svg><svg class="ic m"><use href="#osq"/></svg><svg class="ic m or"><use href="#cubecopy"/></svg><svg class="ic m"><use href="#twolayer"/></svg><svg class="ic m tan"><use href="#stripe"/></svg><svg class="ic m or"><use href="#sheet"/></svg><svg class="ic m or"><use href="#stripe"/></svg><svg class="ic m"><use href="#fan"/></svg><svg class="ic m"><use href="#osqmove"/></svg><svg class="ic m"><use href="#axisb"/></svg><svg class="ic m"><use href="#blob"/></svg><svg class="ic m or"><use href="#cubecopy"/></svg><svg class="ic m"><use href="#plane"/></svg><svg class="ic m"><use href="#arcs"/></svg><svg class="ic m"><use href="#mirror"/></svg><svg class="ic m"><use href="#chain"/></svg><svg class="ic m or"><use href="#cubegrid"/></svg><svg class="ic m or"><use href="#cubemove"/></svg>
  </div>
  <div class="smallicons">
    <svg class="ic or"><use href="#cubestar"/></svg><svg class="ic"><use href="#flat"/></svg><svg class="ic or"><use href="#sheet"/></svg><svg class="ic tan"><use href="#sheet"/></svg><svg class="ic ice"><use href="#patchsheet"/></svg><svg class="ic teal"><use href="#cube"/></svg><svg class="ic or"><use href="#cube"/></svg><svg class="ic or"><use href="#cube"/></svg><svg class="ic tan"><use href="#cube"/></svg><svg class="ic"><use href="#rainbow"/></svg><svg class="ic"><use href="#round"/></svg><svg class="ic"><use href="#dome"/></svg>
    <svg class="ic"><use href="#flat"/></svg><svg class="ic teal"><use href="#patchsheet"/></svg><svg class="ic tan"><use href="#sheet"/></svg><svg class="ic"><use href="#patchsheet"/></svg><svg class="ic teal"><use href="#patchsheet"/></svg><svg class="ic"><use href="#chain"/></svg><svg class="ic tan"><use href="#cube"/></svg><svg class="ic or"><use href="#cube"/></svg><svg class="ic"><use href="#stack"/></svg><svg class="ic"><use href="#kg"/></svg><svg class="ic"><use href="#bell"/></svg>
  </div>
  <i class="dn botend"></i>
</section>
<footer class="status"><span>选择对象以自动判断矢量</span><span>X 轴</span><span></span></footer>

<form class="dialog">
  <header><svg class="ic"><use href="#gear"/></svg><h1>斜率分析</h1>
    <button type="button" aria-label="重置"><svg class="ic"><use href="#reset"/></svg></button><button type="button">?</button><button type="button" aria-label="关闭"><svg class="ic"><use href="#close"/></svg></button></header>
  <div class="panes">
  <section>
    <h2>目标</h2>
    <div class="row r22"><svg class="ic"><use href="#check"/></svg><span class="grow">选择面 (65)</span><button type="button" class="sq" aria-label="选择面"><svg class="ic m"><use href="#target"/></svg></button></div>
  </section>
  <section>
    <h2>参考矢量</h2>
    <div class="row r22"><span class="hl grow"><svg class="ic s"><use href="#star"/></svg>指定矢量</span><button type="button" class="xs dimb" aria-label="反向"><svg class="ic"><use href="#cross"/></svg></button><button type="button" class="xs" aria-label="矢量对话框"><svg class="ic"><use href="#dots"/></svg></button><button type="button" class="yel" aria-label="自动判断的矢量"><svg class="ic m"><use href="#vecbolt"/></svg><i class="dn"></i></button></div>
  </section>
  <section>
    <h2>分析显示</h2>
    <div class="row r17"><label class="grow" for="mode">模态</label><span class="sel"><select id="mode"><option>云图</option></select></span></div>
  </section>
  <section class="range">
    <h2>数据范围</h2>
    <label class="row r15"><input type="checkbox" checked>编辑限制</label>
    <div class="row r15"><label class="grow" for="vmin">最小值</label><input class="num" id="vmin" type="text" value="-0.0100"></div>
    <div class="row r15"><label for="vmid">中间</label><input class="mid" type="range" aria-label="中间滑块" value="50"><span class="grow"></span><input class="num" id="vmid" type="text" value="0.0000"></div>
    <div class="row r15"><label class="grow" for="vmax">最大值</label><input class="num" id="vmax" type="text" value="0.0100"></div>
    <label class="row r15" for="scale">比例因子</label>
    <div class="row r16"><input class="wide" id="scale" type="range" value="80"></div>
    <button type="button" class="resetbtn">重置数据范围</button>
  </section>
  <section>
    <h2>面的法向</h2>
    <div class="row r21"><span class="grow">使面法向反向</span><button type="button" class="sq" aria-label="反向"><svg class="ic m"><use href="#target"/></svg></button></div>
    <div class="row r21"><span class="grow">指定内部位置</span><button type="button" class="xs" aria-label="点对话框"><svg class="ic"><use href="#pdots"/></svg></button><button type="button" class="sq" aria-label="自动判断的点"><svg class="ic m"><use href="#ptbolt"/></svg></button><button type="button" class="drop" aria-label="更多"><i class="dn"></i></button></div>
    <div class="row r21"><span class="grow">恢复所有面法向</span><button type="button" class="sq" aria-label="恢复"><svg class="ic m"><use href="#restore"/></svg></button></div>
  </section>
  <section>
    <h2>设置</h2>
    <fieldset><legend>颜色图例</legend><div class="radios"><label><input type="radio" name="lg" checked>混合</label><label><input type="radio" name="lg">清晰</label></div></fieldset>
    <div class="row r17"><label class="grow" for="cn">颜色数</label><span class="sel"><select id="cn"><option>7</option></select></span></div>
    <div class="row r17"><label class="grow" for="rs">显示分辨率</label><span class="sel"><select id="rs"><option>特精细</option></select></span></div>
    <label class="row r15"><input type="checkbox">显示小平面边</label>
  </section>
  </div>
  <button type="button" class="expand" aria-label="展开"></button>
  <div class="actions"><button type="button" disabled>确定</button><button type="button" disabled>应用</button><button type="button" class="pri">取消</button></div>
</form>
</div>
</body>
</html>
```
FILE: styles.css
```css
* { box-sizing: border-box; }
body { margin: 0; font: 7px/10px "Noto Sans", "Noto Sans CJK SC", sans-serif; color: #333; background: #fff; }
button, input, select { font: inherit; color: inherit; margin: 0; }
button { border: 0; padding: 0; background: none; display: flex; align-items: center; justify-content: center; white-space: nowrap; }
a { color: inherit; text-decoration: none; }
i { font-style: normal; }
.defs { display: none; }
.app { position: relative; display: flex; flex-direction: column; height: 100vh; overflow: hidden; border: solid #046a92; border-width: 0 3px 4px 2px; }

/* icons */
.ic { width: 12px; height: 12px; flex: none; display: block; --a: #e4e4e4; --b: #d2d2d2; --c: #bdbdbd; }
.ic.s { width: 9px; height: 9px; }
.ic.m { width: 16px; height: 16px; }
.ic.l { width: 21px; height: 21px; }
.ic.or { --a: #f59a2e; --b: #ee8518; --c: #e3d6c8; }
.ic.tan { --a: #e6d6c4; --b: #dcc2a4; --c: #d9a57e; }
.ic.ice { --a: #bfe3ea; --b: #d5dbde; --c: #c2cbd0; }
.ic.teal { --a: #79c4cd; --b: #a8d6db; --c: #5aa4b0; }
.ic.pink { --a: #dda6c4; }
.fa { fill: var(--a); }
.fb { fill: var(--b); }
.fc { fill: var(--c); }
.k { fill: none; stroke: #666; stroke-width: .8; }
.k2 { fill: none; stroke: #505050; stroke-width: 1.1; }
.g { fill: none; stroke: #999; stroke-width: .8; }
.w { fill: #fff; stroke: #666; stroke-width: .9; }
.t { fill: none; stroke: #45a6bb; stroke-width: 1; }
.o { fill: none; stroke: #dd935c; stroke-width: 1; }
.r { fill: none; stroke: #c8506a; stroke-width: .9; }
.gr { fill: none; stroke: #4fae94; stroke-width: 1; }
.p { fill: none; stroke: #d7eaf2; stroke-width: 1.3; }
.dim { opacity: .35; }
.half { opacity: .8; }
.tealx { color: #5e9ea4; }
.dn { display: block; flex: none; width: 0; height: 0; border: 2px solid transparent; border-top: 2px solid currentColor; border-bottom: 0; }
.lt { display: block; width: 0; height: 0; border: 2px solid transparent; border-right-color: #222; border-left: 0; }

/* title bar */
.titlebar { display: flex; align-items: center; flex: none; height: 22px; background: #03719a; color: #fff; font-size: 8px; position: relative; }
.logo { font-size: 14px; line-height: 20px; width: 30px; padding-left: 2px; }
.quick, .faded { display: flex; align-items: center; gap: 2px; }
.quick { flex: none; }
.gap4 { margin-right: 4px; }
.faded { opacity: .22; gap: 3px; margin-right: 7px; }
.mic { margin-left: 5px; }
.winbtn { gap: 2px; font-size: 7px; }
.over { border-top-width: 3px; margin-left: 2px; }
.apptitle { position: absolute; left: 0; right: 0; text-align: center; padding-left: 226px; pointer-events: none; }
.brand { margin-left: auto; display: flex; align-items: center; gap: 3px; padding-right: 2px; }
.brand b { font-weight: 800; margin-right: 10px; }

/* tabs */
.tabs { display: flex; flex: none; height: 17px; background: #03719a; color: #fff; font-size: 8px; line-height: 15px; }
.tabs a { padding: 0 8px; margin-right: 1px; border-bottom: 2px solid transparent; white-space: nowrap; }
.tabs .file { padding: 0 16px 0 12px; margin: 0 1px 0 0; }
.tabs .on { color: #eedb74; border-color: #d6cf62; }
.search { display: flex; align-items: center; margin: 1px 0 3px auto; width: 79px; flex: none; background: #fff; border: 1px solid #b7d0da; }
.search input { width: 62px; border: 0; outline: 0; padding: 0; background: none; font-size: 7px; }
.search input::placeholder { color: #bbb; }
.tabend { display: flex; align-items: center; justify-content: space-between; width: 64px; flex: none; padding: 0 6px 0 5px; font-size: 11px; }

/* ribbon */
.ribbon { display: flex; flex: none; height: 58px; border-bottom: 1px solid #d8d8d8; position: relative; padding: 1px 0; }
.group { display: flex; flex-direction: column; border-right: 1px solid #ddd; flex: none; }
.cols { display: flex; flex: 1; align-items: flex-start; }
.glabel { position: relative; text-align: center; color: #2a7596; line-height: 11px; height: 12px; padding-right: 12px; }
.glabel .dn { position: absolute; right: 6px; top: 5px; color: #333; }
.g1 { width: 40px; } .g2 { width: 181px; } .g3 { width: 116px; } .g4 { width: 150px; } .g5 { width: 22px; } .g6 { width: 28px; }
.g7 { flex: 1 1 auto; margin-right: 29px; }
.stack2 { display: flex; flex-direction: column; gap: 6px; padding: 4px 0 0 7px; }
.stack2 button { gap: 5px; justify-content: flex-start; }
.big { flex-direction: column; width: 25px; padding-top: 2px; line-height: 11px; justify-content: flex-start; }
.g2 .cols { padding-left: 3px; }
.g2 .cols > .big:first-child { margin-left: 1px; }
.big .dn { margin-top: 2px; }
.low { padding-top: 7px; }
.trio { display: flex; flex-direction: column; }
.trio button { height: 14px; gap: 2px; justify-content: flex-start; }
.c32 { width: 31px; } .c40 { width: 42px; } .c45 { width: 45px; } .c50 { width: 48px; overflow: hidden; } .c86 { width: 86px; }
.g2 .trio { margin-left: 1px; }
.g3 .c40 { width: 40px; }
.g3 .cols { padding-left: 5px; }
.duo { display: flex; flex-direction: column; gap: 6px; width: 43px; padding-top: 3px; }
.duo button { gap: 2px; justify-content: flex-start; }
.g4 .cols { padding-left: 3px; }
.g5 .big { width: 21px; } .g6 .big { width: 27px; }
.solo { width: 46px; padding-top: 6px; }
.letter { width: 36px; height: 30px; margin-left: -5px; padding-top: 4px; font: 28px/26px "Liberation Serif", serif; color: #149bb5; }
.g7 .solo:first-child { margin-left: 3px; width: 44px; }
.g7 .c45 { margin-left: -4px; }
.ribend { position: absolute; right: 4px; bottom: 6px; }

/* selection bar */
.selbar { display: flex; align-items: center; flex: none; height: 21px; border-bottom: 1px solid #c9c9c9; position: relative; }
.menu { width: 63px; border-right: 1px solid #ddd; height: 17px; justify-content: flex-start; padding-left: 9px; }
.menu .dn { margin-left: 3px; }
.burger { width: 9px; height: 8px; border: solid #888; border-width: 1px 0; margin-right: 5px; background: linear-gradient(#888, #888) 0 50% / 100% 1px no-repeat; }
.sel { position: relative; display: block; height: 15px; border: 1px solid #8c8c8c; background: #fff; }
.sel::after { content: ""; position: absolute; right: 3px; top: 5px; border: 2px solid transparent; border-top: 3px solid #333; border-bottom: 0; pointer-events: none; }
.sel select { appearance: none; border: 0; width: 100%; height: 100%; padding: 0 8px 0 2px; background: none; outline: 0; display: block; }
.s1 { width: 92px; margin: 0 5px 0 4px; }
.s2 { width: 97px; margin-left: 5px; }
.selicons, .viewicons { display: flex; align-items: center; gap: 4px; }
.selicons { margin-left: 5px; flex: none; }
.shade { margin-left: 2px; }
.lit { background: #f0f0f0; }
.viewicons { gap: 5px; margin-left: auto; border-right: 1px solid #ddd; margin-right: 50px; padding-right: 7px; }
.selend { position: absolute; right: 4px; bottom: 7px; }

/* work area */
.work { display: flex; flex: 1; min-height: 0; }
.leftbar { width: 31px; flex: none; display: flex; flex-direction: column; align-items: center; padding-top: 5px; position: relative; padding-right: 3px; }
.lefticons { display: flex; flex-direction: column; justify-content: space-between; flex: 0 1 490px; min-height: 0; }
.quad { display: grid; grid-template-columns: 12px 12px; gap: 3px 2px; border-bottom: 1px solid #ddd; padding: 3px 0; }
.leftbar .lt { position: absolute; left: 4px; bottom: 4px; }
.center { flex: 1 1 504px; min-width: 0; display: flex; flex-direction: column; }
.doctabs { flex: none; height: 16px; border-bottom: 1px solid #06668d; display: flex; }
.doc { display: flex; align-items: center; gap: 3px; background: #06638a; color: #fff; font-size: 7px; padding: 0 4px 0 3px; white-space: nowrap; }
.viewrow { flex: 1; display: flex; min-height: 0; }
.viewport { flex: 1; min-width: 0; position: relative; background: linear-gradient(#b4b4b7, #c9cace 35%, #dcdde0 60%, #e4e5e9 85%); }
.scene { display: block; width: 100%; height: 100%; font: 9px "Liberation Sans", sans-serif; }
.scene .sm { font-size: 7px; }
.ghost path { fill: none; stroke: #cdd0d6; stroke-width: .7; }
.wire path { fill: none; stroke: #b0b3b7; stroke-width: .8; }
.boxl { fill: none; stroke: #b7b9be; stroke-width: .8; }
.cursor * { fill: none; stroke: #38403f; stroke-width: 1.8; }
.cursor circle { stroke-width: 1; stroke-dasharray: 7 4; stroke-dashoffset: -2; }
.cursor .inner { stroke: #b9c4c3; stroke-width: .6; }
.floatbar { position: absolute; left: 157px; top: 3px; width: 168px; height: 20px; background: #fff; display: flex; align-items: center; padding-left: 7px; }
.floatbar .sel { width: 98px; height: 14px; border-color: #c4c4c4; color: #aaa; margin-right: 8px; }
.floatbar .sel::after { border-top-color: #aaa; }
.floatbar select:disabled { opacity: 1; }
.ell { color: #888; width: 16px; font-size: 9px; }
.floatbar .dn { margin-left: 3px; }
.floatbar .end { margin: 9px 3px 0 auto; }
.gutter { width: 21px; flex: none; display: flex; align-items: flex-end; padding: 0 0 4px 4px; }
.navigator { flex: 1 1 336px; min-width: 0; border-left: 1px solid #c8c8c8; padding: 17px 4px 4px 5px; display: flex; flex-direction: column; }
.tablewrap { flex: 1; min-height: 0; overflow: hidden; border-right: 1px solid #ddd; }
table { width: 100%; height: 100%; border-collapse: collapse; table-layout: fixed; line-height: 8px; }
col.n { width: 15px; } col.note { width: 61px; } col.rest { width: 110px; }
th, td { padding: 0; border-right: 1px solid #ececec; overflow: hidden; }
th { height: 15px; background: #f1f1f1; font-weight: 400; text-align: left; padding-left: 4px; border-color: #ddd; }
td { border-bottom: 1px solid #f3f3f3; height: 12px; }
tbody tr:nth-child(even) { background: #f9f9f9; }
td .ic { width: 11px; height: 10px; margin: 0 auto; }
td .narrow { width: 8px; }
.hbar { flex: none; height: 3px; background: #c9c9c9; }
.fold { flex: none; width: 100%; height: 15px; border-bottom: 1px solid #c6c6c6; justify-content: flex-start; gap: 5px; padding-left: 7px; padding-top: 2px; font-size: 8px; color: #2a7596; }
.fold::before { content: ""; border: 2px solid transparent; border-left: 3px solid #155e7e; border-right: 0; }
.rightbar { width: 20px; flex: none; background: #dcdcdc; display: flex; flex-direction: column; border-left: 1px solid #c8c8c8; }
.rightbar button { width: 100%; height: 26px; flex: none; }
.rightbar .cog { height: 17px; margin-bottom: 9px; }
.rightbar .cog .ic { width: 9px; height: 9px; }
.rightbar .on { background: #fff; }
.rightbar .sp8 { margin-top: 8px; }
.rightbar .sp6 { margin-top: 6px; }
.boxed { background: #fff; outline: 1px solid #888; outline-offset: -1px; }

/* bottom */
.bottombar { display: flex; align-items: center; flex: none; height: 29px; border-bottom: 1px solid #d9d3d8; position: relative; padding-left: 5px; }
.bigicons { display: flex; justify-content: space-between; flex: 0 1 667px; min-width: 0; }
.smallicons { display: grid; grid-template-columns: repeat(12, 1fr); row-gap: 2px; flex: 0 1 184px; margin-left: 3px; border-right: 1px solid #eee; justify-items: center; }
.botend { position: absolute; right: 4px; bottom: 5px; }
.status { display: grid; grid-template-columns: 1fr auto 1fr; flex: none; height: 14px; align-items: center; padding: 0 20px 0 2px; color: #222; font-weight: 500; }

/* dialog */
.dialog { position: absolute; left: 463px; top: 69px; width: 202px; background: #ededed; font-size: 8px; line-height: 12px; box-shadow: 0 0 2px #999; }
.dialog header { display: flex; align-items: center; height: 14px; background: #045f88; color: #fff; padding: 0 4px 0 3px; gap: 5px; }
.dialog header .ic { width: 10px; height: 10px; }
.dialog header button { font-size: 10px; font-weight: 700; width: 10px; margin-left: -1px; }
.dialog h1 { font: inherit; font-size: 9px; margin: 0; flex: 1; }
.panes { display: flex; flex-direction: column; gap: 2px; padding: 2px 3px 1px; }
.panes section { background: #fff; padding: 0 6px 4px; }
.panes .range { padding-bottom: 6px; }
.dialog h2 { font: inherit; font-size: 9px; line-height: 18px; height: 18px; margin: 0; color: #2a7596; display: flex; align-items: center; gap: 4px; margin-left: -1px; }
.dialog h2::before { content: ""; border: 3px solid transparent; border-top: 3px solid #155e7e; border-bottom: 0; }
.row { display: flex; align-items: center; }
.grow { flex: 1; }
.r22 { height: 22px; } .r21 { height: 21px; } .r17 { height: 17px; } .r16 { height: 16px; } .r15 { height: 15px; }
.row > .ic:first-child { width: 10px; margin-right: 2px; }
.sq { width: 20px; height: 20px; border: 1px solid #8c8c8c; background: #fff; }
.sq .ic.m { width: 14px; height: 14px; }
.hl { display: flex; align-items: center; gap: 3px; height: 19px; background: #fddf7c; margin-right: 2px; color: #222; }
.xs { width: 15px; height: 15px; border: 1px solid #888; background: #fff; margin-right: 1px; }
.xs .ic { width: 11px; height: 11px; }
.dimb { border-color: #ccc; color: #aaa; }
.yel { width: 30px; height: 19px; background: #fddf7c; gap: 5px; }
.yel .ic.m { width: 14px; height: 14px; }
.dialog .sel { width: 88px; }
.dialog input[type=checkbox], .dialog input[type=radio] { width: 8px; height: 8px; margin: 0 3px 0 0; accent-color: #0f62a8; }
.num { width: 51px; height: 15px; border: 1px solid #8c8c8c; padding: 0 3px; text-align: right; font: 10px/13px "Liberation Mono", monospace; color: #555; outline: 0; }
input[type=range] { appearance: none; background: none; height: 12px; }
input[type=range]::-webkit-slider-runnable-track { height: 2px; background: #b3b3b3; }
input[type=range]::-webkit-slider-thumb { appearance: none; width: 5px; height: 12px; margin-top: -5px; background: #0c5a7c; }
.mid { width: 78px; margin-left: 5px; }
.wide { width: 175px; margin-left: 4px; }
.resetbtn { width: 100%; height: 18px; border: 1px solid #8c8c8c; background: #fff; }
.drop { width: 11px; height: 20px; border: 1px solid #8c8c8c; border-left: 0; }
fieldset { margin: 1px 0 1px; border: 0; padding: 0 3px; background: #efefef; height: 30px; min-width: 0; }
legend { float: left; width: 100%; padding: 0 0 0 3px; color: #2a7596; line-height: 13px; }
.radios { display: flex; gap: 9px; clear: both; height: 16px; align-items: center; }
.radios label { display: flex; align-items: center; }
.expand { width: 196px; height: 10px; margin: 0 3px; border: solid #d2d2d2; border-width: 1px 0; }
.expand::before { content: ""; border: 3px solid transparent; border-top: 3px solid #222; border-bottom: 0; }
.actions { display: flex; justify-content: flex-end; gap: 4px; padding: 4px 10px 7px; }
.actions button { width: 33px; height: 15px; border: 1px solid #c9c9c9; color: #aaa; }
.actions .pri { border-color: #2a7596; color: #0c5a7c; background: #f2f8fb; }
```
